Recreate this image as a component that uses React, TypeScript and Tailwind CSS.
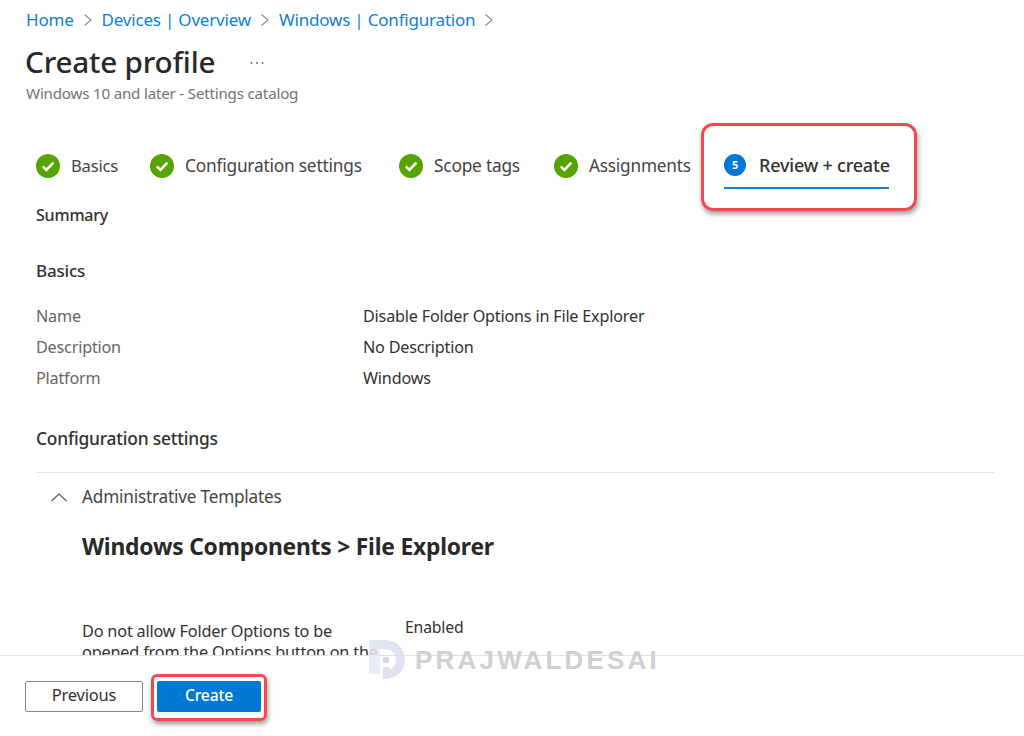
import React from "react";

function Check() {
  return (
    <svg width="24" height="24" viewBox="0 0 24 24" className="shrink-0">
      <circle cx="12" cy="12" r="12" fill="#57A300" />
      <path d="M6.8 12.4l3.6 3.6 7-7.4" fill="none" stroke="#fff" strokeWidth="2.6" />
    </svg>
  );
}

function Chevron() {
  return (
    <svg width="10" height="14" viewBox="0 0 10 14" className="shrink-0">
      <path d="M1.5 1.5L8 7l-6.5 5.5" fill="none" stroke="#8a8886" strokeWidth="1.1" />
    </svg>
  );
}

function Step({ label, width, size }: { label: string; width: string; size: string }) {
  return (
    <div className={`flex items-center gap-[11px] ${width}`}>
      <Check />
      <span className={`${size} leading-[24px] text-[#444]`}>{label}</span>
    </div>
  );
}

function Row({ k, v }: { k: string; v: string }) {
  return (
    <div className="flex h-[31px] items-center text-[16.2px]">
      <span className="w-[327px] text-[#666]">{k}</span>
      <span className="text-[#323130]">{v}</span>
    </div>
  );
}

export default function App() {
  return (
    <div className="relative flex h-[736px] w-[1024px] flex-col overflow-hidden bg-white font-['Noto_Sans','Open_Sans',sans-serif] tracking-[-0.2px]">
      <div className="h-[655px] overflow-hidden">
        <nav className="mt-[10px] flex h-[20px] items-center gap-[9px] pl-[26px] text-[17px] text-[#0f7fd8]">
          <span>Home</span>
          <Chevron />
          <span>Devices | Overview</span>
          <Chevron />
          <span>Windows | Configuration</span>
          <Chevron />
        </nav>
        <div className="mt-[12px] flex h-[40px] items-center pl-[25px]">
          <h1 className="text-[29.7px] font-medium text-[#292827]">Create profile</h1>
          <svg width="14" height="4" viewBox="0 0 14 4" className="ml-[35px] mt-[2px] shrink-0">
            <circle cx="1.5" cy="2" r="0.9" fill="#666" />
            <circle cx="7" cy="2" r="0.9" fill="#666" />
            <circle cx="12.5" cy="2" r="0.9" fill="#666" />
          </svg>
        </div>
        <p className="mt-[1px] h-[20px] pl-[26px] text-[15.15px] leading-[20px] text-[#737373]">Windows 10 and later - Settings catalog</p>

        <div className="relative mt-[40px] flex h-[46px] items-center pl-[36px]">
          <Step label="Basics" width="w-[114px]" size="text-[16.6px]" />
          <Step label="Configuration settings" width="w-[249px]" size="text-[17.3px]" />
          <Step label="Scope tags" width="w-[155px]" size="text-[17.3px]" />
          <Step label="Assignments" width="w-[170px]" size="text-[17.2px]" />
          <div className="flex h-[46px] w-[165px] items-center gap-[13px] border-b-2 border-[#0f7fd8]">
            <span className="flex h-[22px] w-[22px] shrink-0 items-center justify-center rounded-full bg-[#0078d4] text-[11px] font-bold text-white">5</span>
            <span className="whitespace-nowrap text-[18px] font-medium text-[#323130]">Review + create</span>
          </div>
          <div className="absolute left-[701px] top-[-20px] h-[88px] w-[216px] rounded-[12px] border-[3px] border-[#f4484f] shadow-[1px_3px_5px_rgba(0,0,0,0.4)]" />
        </div>

        <div className="pl-[36px] pr-[30px]">
          <h2 className="mt-[14px] h-[24px] text-[16px] font-medium leading-[24px] text-[#323130]">Summary</h2>
          <h2 className="mt-[32px] h-[24px] text-[17px] font-medium leading-[24px] text-[#323130]">Basics</h2>
          <div className="mt-[18px]">
            <Row k="Name" v="Disable Folder Options in File Explorer" />
            <Row k="Description" v="No Description" />
            <Row k="Platform" v="Windows" />
          </div>
          <h2 className="mt-[32px] h-[24px] text-[17.4px] font-medium leading-[24px] text-[#323130]">Configuration settings</h2>
          <div className="mt-[22px] border-t border-[#e1e1e1] pt-[13px]">
            <div className="flex h-[22px] items-center">
              <svg width="18" height="10" viewBox="0 0 18 10" className="ml-[14px] shrink-0">
                <path d="M1.5 9L9 2l7.5 7" fill="none" stroke="#555" strokeWidth="1.1" />
              </svg>
              <span className="ml-[14px] text-[17.2px] text-[#444]">Administrative Templates</span>
            </div>
            <h3 className="ml-[46px] mt-[24px] h-[30px] text-[22.8px] font-bold leading-[30px] text-[#292827]">Windows Components &gt; File Explorer</h3>
            <div className="ml-[46px] mt-[55px] flex items-start">
              <p className="mt-[4px] w-[300px] text-[16.3px] leading-[21px] text-[#323130]">Do not allow Folder Options to be opened from the Options button on the View tab of the ribbon</p>
              <span className="ml-[23px] text-[15.8px] leading-[21px] text-[#323130]">Enabled</span>
            </div>
          </div>
        </div>
      </div>

      <div className="flex h-[81px] items-start gap-[8px] border-t border-[#e1e1e1] bg-white pl-[25px] pt-[25px]">
        <button className="h-[31px] w-[118px] rounded-[2px] border border-[#8a8886] bg-white pb-[4px] text-[16.5px] leading-[24px] text-[#323130]">Previous</button>
        <div className="mt-[-7px] rounded-[6px] border-[3px] border-[#f4484f] px-[3px] pb-[6px] pt-[4px] shadow-[1px_3px_5px_rgba(0,0,0,0.4)]">
          <button className="block h-[31px] w-[104px] rounded-[2px] bg-[#0078d4] pb-[4px] text-[15.7px] font-medium leading-[24px] text-white">Create</button>
        </div>
      </div>

      <div className="absolute left-[369px] top-[640px] flex h-[40px] items-center">
        <svg width="37" height="41" viewBox="0 0 37 41" className="opacity-80">
          <defs>
            <linearGradient id="wm" x1="0" y1="0" x2="1" y2="1">
              <stop offset="0" stopColor="#d8e6ef" />
              <stop offset="1" stopColor="#dcd6f2" />
            </linearGradient>
          </defs>
          <rect x="0" y="8" width="11" height="26" fill="#e4ecf5" />
          <path d="M0 0H16C28 0 36 9 36 20C36 31 27 38 19 38V30C24 29 27 25 27 20C27 13 22 9 15 9H0Z" fill="url(#wm)" />
          <rect x="14" y="17" width="6" height="6" rx="1" fill="#c9cdea" />
          <rect x="14" y="27" width="6" height="12" fill="#d9d9f0" />
        </svg>
        <span className="ml-[9px] font-['Liberation_Sans',sans-serif] text-[26px] font-bold tracking-[3.2px] text-[#d0d0d0]">PRAJWALDESAI</span>
      </div>
    </div>
  );
}
